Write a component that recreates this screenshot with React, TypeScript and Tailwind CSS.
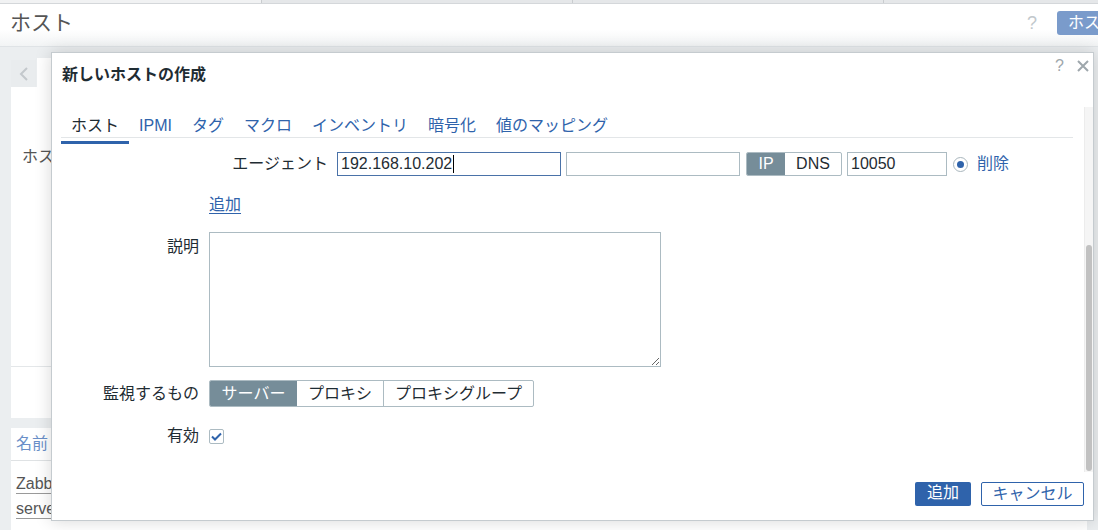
import React from "react";

const tabs = ["ホスト", "IPMI", "タグ", "マクロ", "インベントリ", "暗号化", "値のマッピング"];

function Row({ label, className, children }: { label?: string; className?: string; children: React.ReactNode }) {
  return (
    <div className={`flex ${className ?? ""}`}>
      <div className="w-[147px] shrink-0 text-right leading-[20px]">{label}</div>
      <div className="ml-[10px] flex items-center">{children}</div>
    </div>
  );
}

function PageBehind() {
  return (
    <div className="flex h-full flex-col">
      {/* top strip */}
      <div className="flex h-[4px] shrink-0 border-b border-[#d4d7da] bg-[#e5e7e9]">
        <div className="w-[262px] border-r border-[#c9cccf] bg-[#f1f2f3]" />
        <div className="w-[311px] border-r border-[#c9cccf]" />
        <div className="w-[311px] border-r border-[#c9cccf]" />
      </div>

      {/* page header */}
      <header className="flex h-[43px] shrink-0 items-center border-b border-[#dfe3e6] bg-gradient-to-b from-white from-60% to-[#f2f4f5] pb-[5px] pl-[10px]">
        <h1 className="text-[21px] leading-[28px] text-[#555]">ホスト</h1>
        <div className="flex-1" />
        <span className="text-[18px] leading-[20px] text-[#c2c8cc]">?</span>
        <div className="ml-[20px] h-[24px] w-[41px] overflow-hidden whitespace-nowrap rounded-l-[3px] bg-[#7a9bcb] pl-[11px] text-[16px] leading-[24px] text-white">
          ホス
        </div>
      </header>

      <main className="flex min-h-0 flex-1 flex-col overflow-hidden pl-[11px] pr-[11px] pt-[11px]">
        <div className="flex h-[29px] shrink-0">
          <div className="mt-[2px] flex w-[25px] items-center justify-center bg-[#e9ecee]">
            <svg width="10" height="14" viewBox="0 0 10 14">
              <path d="M8 1 L2 7 L8 13" fill="none" stroke="#c3c8cc" strokeWidth="2" />
            </svg>
          </div>
          <div className="ml-[1px] w-[200px] bg-white" />
        </div>
        <div className="flex h-[331px] shrink-0 flex-col bg-white">
          <div className="h-[280px] border-b border-[#e4e7e9] pl-[11px] pt-[60px] text-[16px] leading-[20px] text-[#555]">
            ホストグループ
          </div>
        </div>
        <div className="mt-[10px] h-[33px] shrink-0 border-b border-[#dfe2e4] bg-white pl-[5px] pt-[6px] text-[16px] leading-[20px] text-[#6a8fc8]">
          名前
        </div>
        <div className="flex-1 shrink-0 bg-white pl-[5px] pt-[10px] text-[16px] leading-[25px] text-[#555]">
          <div><span className="underline decoration-[#9a9a9a] underline-offset-[4px]">Zabbix</span></div>
          <div><span className="underline decoration-[#9a9a9a] underline-offset-[4px]">server</span></div>
        </div>
      </main>
    </div>
  );
}

function Dialog() {
  return (
    <div className="absolute left-[51px] top-[52px] flex h-[469px] w-[1043px] flex-col border border-[#c5cbcf] bg-white shadow-[0_0_16px_rgba(0,0,0,0.16)]">
      {/* title */}
      <div className="relative h-[52px] shrink-0 pl-[10px] pt-[12px]">
        <h2 className="text-[16px] font-bold leading-[20px] text-[#1f2c33]">新しいホストの作成</h2>
        <div className="absolute right-[4px] top-[7px] flex h-[12px] items-center gap-[13px] text-[#9ea7ac]">
          <span className="text-[16px] leading-[12px]">?</span>
          <svg width="12" height="12" viewBox="0 0 12 12">
            <path d="M1 1 L11 11 M11 1 L1 11" stroke="#9ea7ac" strokeWidth="2" />
          </svg>
        </div>
      </div>

      {/* body */}
      <div className="flex min-h-0 flex-1">
        <div className="flex-1 pt-[11px]">
          <nav className="flex pl-[9px] text-[16px] leading-[20px]">
            {tabs.map((t, i) => (
              <span key={t} className={`px-[10px] ${i === 0 ? "text-[#1f2c33]" : "text-[#2f63ab]"}`}>
                {t}
              </span>
            ))}
          </nav>
          <div className="ml-[9px] mr-[11px] mt-[1px] h-px bg-[#e3e6e8]" />
          <div className="ml-[9px] mt-[3px] h-[3px] w-[68px] bg-[#2f63ab]" />

          <div className="text-[16px] text-[#1f2c33]">
            {/* interface row */}
            <Row className="mt-[8px] h-[24px]">
              <span className="w-[119px] text-right leading-[20px]">エージェント</span>
              <div className="ml-[9px] flex h-[24px] w-[224px] items-center border border-[#4a72a8] pl-[3px] leading-[20px]">
                192.168.10.202
                <span className="ml-px h-[18px] w-px bg-black" />
              </div>
              <div className="ml-[5px] h-[24px] w-[174px] border border-[#acbbc2]" />
              <div className="ml-[6px] flex h-[24px] w-[96px] overflow-hidden rounded-[2px] border border-[#acbbc2] leading-[22px]">
                <span className="w-[38px] bg-[#768d99] text-center text-white">IP</span>
                <span className="flex-1 text-center">DNS</span>
              </div>
              <div className="ml-[5px] flex h-[24px] w-[100px] items-center border border-[#acbbc2] pl-[3px] leading-[20px]">
                10050
              </div>
              <span className="ml-[6px] flex h-[15px] w-[15px] items-center justify-center rounded-full border border-[#a9b6bd]">
                <span className="h-[7px] w-[7px] rounded-full bg-[#2f63ab]" />
              </span>
              <span className="ml-[9px] leading-[20px] text-[#2f63ab]">削除</span>
            </Row>

            <Row className="mt-[19px]">
              <span className="leading-[20px] text-[#2f63ab] underline underline-offset-[3px]">追加</span>
            </Row>

            <Row label="説明" className="mt-[17px] [&>div:first-child]:pt-[5px]">
              <textarea readOnly className="h-[135px] w-[452px] border border-[#acbbc2] bg-white outline-none" />
            </Row>

            <Row label="監視するもの" className="mt-[13px] h-[27px] items-center">
              <div className="flex h-[27px] overflow-hidden rounded-[2px] border border-[#acbbc2] leading-[25px]">
                <span className="w-[87px] bg-[#768d99] text-center text-white">サーバー</span>
                <span className="w-[87px] border-r border-[#acbbc2] text-center">プロキシ</span>
                <span className="w-[149px] text-center">プロキシグループ</span>
              </div>
            </Row>

            <Row label="有効" className="mt-[17px] h-[24px] items-center">
              <span className="flex h-[15px] w-[15px] items-center justify-center rounded-[2px] border border-[#acbbc2]">
                <svg width="11" height="9" viewBox="0 0 11 9">
                  <path d="M1 4.5 L4 7.5 L10 1.5" fill="none" stroke="#2f63ab" strokeWidth="2" />
                </svg>
              </span>
            </Row>
          </div>
        </div>

        {/* scrollbar */}
        <div className="mt-[2px] flex w-[9px] flex-col justify-end border-l border-[#ececec] bg-[#f5f5f5] pb-[1px]">
          <div className="mx-[1px] h-[226px] rounded-full bg-[#c1c1c1]" />
        </div>
      </div>

      {/* footer */}
      <div className="flex h-[48px] shrink-0 justify-end gap-[10px] pr-[9px] pt-[10px] text-[16px] leading-[22px]">
        <span className="h-[24px] w-[56px] rounded-[2px] bg-[#2f63ab] text-center text-white">追加</span>
        <span className="h-[24px] w-[103px] rounded-[2px] border border-[#2f63ab] text-center text-[#2f63ab]">キャンセル</span>
      </div>
    </div>
  );
}

export default function App() {
  return (
    <div className="relative h-[530px] w-[1098px] overflow-hidden bg-[#ebeef0] font-['Liberation_Sans','Noto_Sans_CJK_JP',sans-serif] text-[#1f2c33]">
      <PageBehind />
      <Dialog />
    </div>
  );
}
